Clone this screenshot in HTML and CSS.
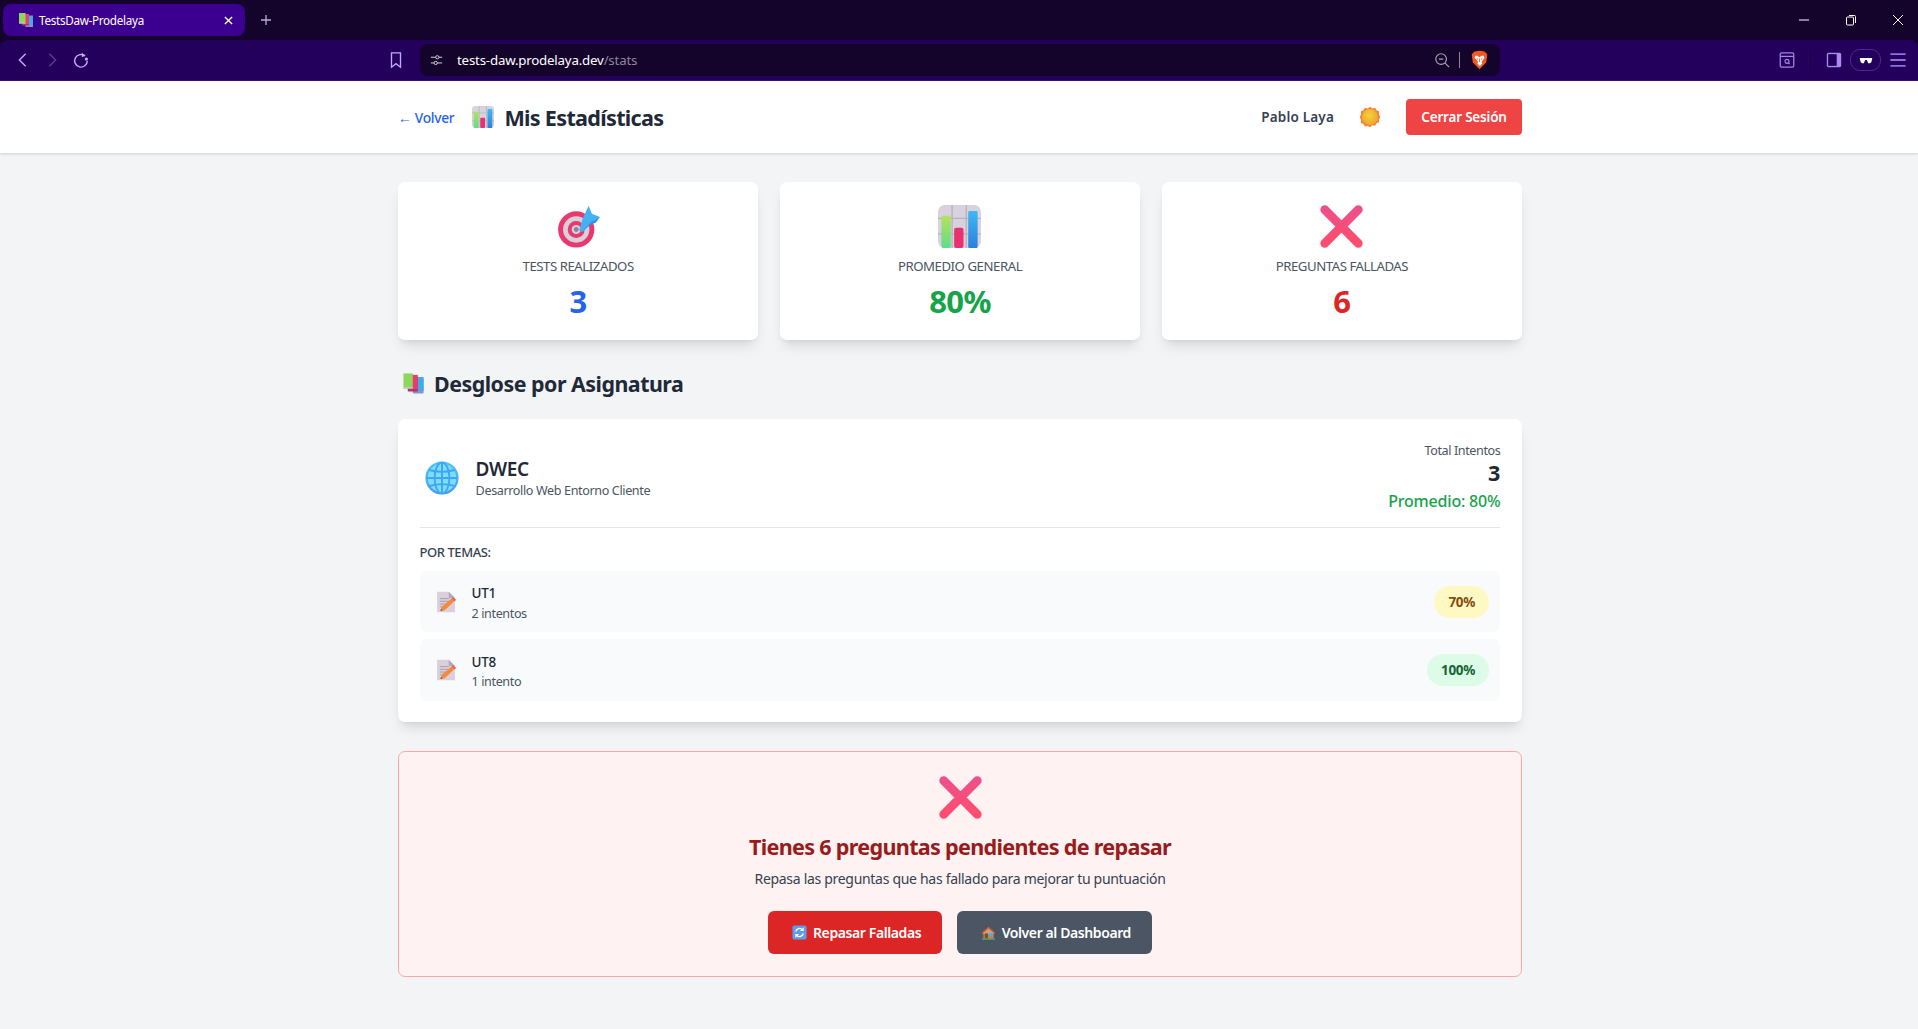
FILE: index.html
```html
<!DOCTYPE html>
<html lang="es">
<head>
<meta charset="utf-8">
<title>TestsDaw-Prodelaya</title>
<link rel="stylesheet" href="styles.css">
</head>
<body>
<svg class="defs" width="0" height="0" aria-hidden="true">
  <defs>
    <linearGradient id="gPink" x1="0" y1="0" x2="0" y2="1"><stop offset="0" stop-color="#ee4f8a"/><stop offset="1" stop-color="#ff4d6d"/></linearGradient>
    <linearGradient id="gGreen" x1="0" y1="0" x2="0" y2="1"><stop offset="0" stop-color="#b4e35a"/><stop offset="1" stop-color="#5fdc8a"/></linearGradient>
    <linearGradient id="gBlue" x1="0" y1="0" x2="0" y2="1"><stop offset="0" stop-color="#3db8f5"/><stop offset="1" stop-color="#2e7fdc"/></linearGradient>
    <linearGradient id="gGlobe" x1="0" y1="0" x2="0" y2="1"><stop offset="0" stop-color="#45c9f7"/><stop offset="1" stop-color="#4a9cf5"/></linearGradient>
    <radialGradient id="gSun" cx=".45" cy=".4" r=".6"><stop offset="0" stop-color="#f7d13c"/><stop offset="1" stop-color="#eaa92e"/></radialGradient>
    <symbol id="i-cross" viewBox="0 0 32 32">
      <path d="M3.500 3.500 28.500 28.500M28.500 3.500 3.500 28.500" fill="none" stroke="url(#gPink)" stroke-width="6.500" stroke-linecap="round"/>
    </symbol>
    <symbol id="i-chart" viewBox="0 0 32 32">
      <rect width="32" height="32" rx="5" fill="#d8d2de"/>
      <path d="M10.500 0v32M21 0v32M0 10h32M0 21.500h32" stroke="#b8b2bf" stroke-width="1"/>
      <rect x="2.500" y="8" width="7" height="24" rx="1.500" fill="url(#gGreen)"/>
      <rect x="12" y="17" width="7" height="15" rx="1.500" fill="#e8316f"/>
      <rect x="22.500" y="4.500" width="7" height="27.500" rx="1" fill="url(#gBlue)"/>
    </symbol>
    <symbol id="i-target" viewBox="0 0 32 32">
      <circle cx="14.300" cy="18.200" r="13.500" fill="#e8386d"/>
      <circle cx="14.300" cy="18.200" r="9.800" fill="#d7cfd9"/>
      <circle cx="14.300" cy="18.200" r="6.300" fill="#e8386d"/>
      <circle cx="14.300" cy="18.200" r="3.400" fill="#d7cfd9"/>
      <circle cx="14.300" cy="18.200" r="1.800" fill="#8a8590"/>
      <path d="M16.500 19 19 10.500 23.500.5l2.500 6 6 2.500-6 4-7 7z" fill="#45b1f5"/>
      <path d="M18.500 20 25 13l7-4-3 4-4 1.500z" fill="#2f93e6"/>
    </symbol>
    <symbol id="i-books" viewBox="0 0 32 32">
      <rect x="15" y="9" width="15" height="21" rx="1" fill="#8d8fd6"/>
      <rect x="15" y="7" width="15" height="19" fill="#3dace8"/>
      <rect x="8" y="6" width="14" height="21" rx="1" fill="#a8385f"/>
      <rect x="9" y="4" width="13" height="20" fill="#ec3a70"/>
      <rect x="2" y="2" width="13" height="21" fill="#8dd85c"/>
      <rect x="2" y="21" width="13" height="2" fill="#c9c4cf"/>
    </symbol>
    <symbol id="i-globe" viewBox="0 0 32 32">
      <circle cx="16" cy="16" r="14.500" fill="#7fdcfb" stroke="url(#gGlobe)" stroke-width="2.200"/>
      <g fill="none" stroke="#3ea7f3" stroke-width="1.800">
        <ellipse cx="16" cy="16" rx="7" ry="14.500"/>
        <path d="M16 1.500v29M1.500 16h29M4 8.500c7 2 17 2 24 0M4 23.500c7-2 17-2 24 0"/>
      </g>
    </symbol>
    <symbol id="i-doc" viewBox="0 0 32 32">
      <path d="M3 1h17l9 9v21H3z" fill="#d9d0dc"/>
      <path d="M20 1l9 9h-9z" fill="#b3a9ba"/>
      <path d="M7 11h13M7 15h15M7 19h11M7 23h7" stroke="#a49aa9" stroke-width="1.300"/>
      <path d="M8 29l2-6L24 11l4 4-14 13z" fill="#f58a3c"/>
      <path d="M24 11l2-2 5 4-3 2z" fill="#f4574e"/>
      <path d="M8 29l.8-3 2.200 2z" fill="#55404a"/>
    </symbol>
    <symbol id="i-sun" viewBox="0 0 32 32">
      <path d="M16 1l3.500 2.500 4-.8 2 3.600 3.800 1.500-.3 4.200L31 16l-2 3.500.3 4.200-3.800 1.500-2 3.600-4-.8L16 31l-3.500-2-4 .8-2-3.600-3.800-1.500.3-4.200L1 16l2-4-.3-4.200 3.800-1.500 2-3.600 4 .8z" fill="#f5863a"/>
      <circle cx="16" cy="16" r="11.500" fill="url(#gSun)"/>
    </symbol>
    <symbol id="i-refresh" viewBox="0 0 32 32">
      <rect x="1" y="1" width="30" height="30" rx="4" fill="#5b9cf0"/>
      <path d="M8 14a8 8 0 0 1 14-4M24 18a8 8 0 0 1-14 4" fill="none" stroke="#fff" stroke-width="2.800"/>
      <path d="M25 5v8h-8zM7 27v-8h8z" fill="#fff"/>
    </symbol>
    <symbol id="i-house" viewBox="0 0 32 32">
      <path d="M5 14h22v15H5z" fill="#b8895f"/>
      <path d="M1 17 16 3l15 14-2 2L16 7 3 19z" fill="#d9532c"/>
      <path d="M16 7 5 17v2h22v-2z" fill="#c9a17a"/>
      <rect x="8" y="18" width="7" height="11" fill="#7a4f2f"/>
      <rect x="18" y="17" width="7" height="6" fill="#45b1f5"/>
      <rect x="2" y="29" width="28" height="2" fill="#5fc46a"/>
    </symbol>
    <symbol id="i-brave" viewBox="0 0 24 28">
      <path d="M12 1 5 2 1 6l1.500 11L12 27l9.500-10L23 6l-4-4z" fill="#f05a22"/>
      <path d="M6 8h3l3 2 3-2h3l1 3-2.500 3-1.500 3 1 2-3 3h-1l-3-3 1-2-1.500-3L5 11z" fill="#fff"/>
      <path d="M12 12v5M8 12l2 1M16 12l-2 1" stroke="#f05a22" stroke-width="1.200"/>
    </symbol>
  </defs>
</svg>

<div class="browser">
  <div class="tabstrip">
    <div class="tab">
      <svg class="ico-14"><use href="#i-books"/></svg>
      <span class="tab-title">TestsDaw-Prodelaya</span>
      <svg class="tab-close" viewBox="0 0 10 10"><path d="M1 1l8 8M9 1 1 9" stroke="#fff" stroke-width="1.500"/></svg>
    </div>
    <svg class="tab-new" viewBox="0 0 12 12"><path d="M6 1v10M1 6h10" stroke="#b9aecb" stroke-width="1.300"/></svg>
    <div class="win-controls">
      <svg class="win-ico" viewBox="0 0 12 12"><path d="M1 6h10" stroke="#fff"/></svg>
      <svg class="win-ico" viewBox="0 0 12 12"><rect x="1.500" y="3" width="7" height="8" rx="1" fill="none" stroke="#fff"/><path d="M4 1.500h5.500a1 1 0 0 1 1 1V9" fill="none" stroke="#fff"/></svg>
      <svg class="win-ico" viewBox="0 0 12 12"><path d="M1 1l10 10M11 1 1 11" stroke="#fff"/></svg>
    </div>
  </div>
  <div class="toolbar">
    <div class="nav">
      <svg class="tb-ico" viewBox="0 0 20 20"><path d="M13 3 6 10l7 7" fill="none" stroke="#c2a9fb" stroke-width="1.600"/></svg>
      <svg class="tb-ico" viewBox="0 0 20 20"><path d="M7 3l7 7-7 7" fill="none" stroke="#5c3c9a" stroke-width="1.600"/></svg>
      <svg class="tb-ico" viewBox="0 0 20 20"><path d="M14.500 5.500a7 7 0 1 0 2.500 5.500" fill="none" stroke="#c2a9fb" stroke-width="1.600"/><circle cx="16" cy="9" r="1.800" fill="#c2a9fb"/><path d="M11 2l4 3-4 2" fill="#c2a9fb"/></svg>
    </div>
    <svg class="tb-ico bookmark" viewBox="0 0 20 20"><path d="M5 2h10v16l-5-4-5 4z" fill="none" stroke="#c2a9fb" stroke-width="1.500"/></svg>
    <div class="urlbar">
      <svg class="url-tune" viewBox="0 0 16 16"><path d="M1 4h6M11 4h4M1 11h4M9 11h6" stroke="#d7d2de" stroke-width="1.200"/><circle cx="9" cy="4" r="2" fill="none" stroke="#d7d2de" stroke-width="1.200"/><circle cx="7" cy="11" r="2" fill="none" stroke="#d7d2de" stroke-width="1.200"/></svg>
      <span class="url-text">tests-daw.prodelaya.dev<span class="url-path">/stats</span></span>
      <svg class="url-zoom" viewBox="0 0 18 18"><circle cx="8" cy="8" r="6" fill="none" stroke="#a9a3b3" stroke-width="1.300"/><path d="M5.500 8h5M12.500 12.500 17 17" stroke="#a9a3b3" stroke-width="1.300"/></svg>
      <span class="url-sep"></span>
      <svg class="url-brave"><use href="#i-brave"/></svg>
    </div>
    <div class="tools">
      <svg class="tb-ico" viewBox="0 0 20 20"><rect x="2.500" y="2" width="15" height="16" rx="1.500" fill="none" stroke="#a283ea" stroke-width="1.400"/><path d="M2.500 6h15" stroke="#a283ea" stroke-width="1.400"/><circle cx="10" cy="11.500" r="2.200" fill="none" stroke="#a283ea" stroke-width="1.300"/><path d="M11.500 13l1.500 1.500" stroke="#a283ea" stroke-width="1.300"/></svg>
      <span class="tool-sep"></span>
      <svg class="tb-ico" viewBox="0 0 20 20"><rect x="2" y="2" width="16" height="16" rx="2" fill="#a98af0"/><rect x="3.500" y="3.500" width="9.500" height="13" fill="#22005c"/></svg>
      <span class="glasses"><svg class="glasses-ico" viewBox="0 0 16 8"><path d="M1 1h14v1.500l-1 3.500-1.500 1h-2L9 3.500H7L5.500 7h-2L2 6 1 2.500z" fill="#fff"/></svg></span>
      <svg class="tb-ico" viewBox="0 0 20 20"><path d="M1.500 3.500h17M1.500 10h17M1.500 16.500h17" stroke="#8f6fe0" stroke-width="2"/></svg>
    </div>
  </div>
</div>

<header class="topbar">
  <div class="wrap topbar-inner">
    <div class="topbar-left">
      <a class="back">← Volver</a>
      <svg class="ico-title"><use href="#i-chart"/></svg>
      <h1 class="title">Mis Estadísticas</h1>
    </div>
    <div class="topbar-right">
      <span class="user">Pablo Laya</span>
      <svg class="ico-sun"><use href="#i-sun"/></svg>
      <button class="logout">Cerrar Sesión</button>
    </div>
  </div>
</header>

<main class="wrap main">
  <section class="stats">
    <div class="stat">
      <svg class="ico-stat"><use href="#i-target"/></svg>
      <div class="stat-label">TESTS REALIZADOS</div>
      <div class="stat-value blue">3</div>
    </div>
    <div class="stat">
      <svg class="ico-stat"><use href="#i-chart"/></svg>
      <div class="stat-label">PROMEDIO GENERAL</div>
      <div class="stat-value green">80%</div>
    </div>
    <div class="stat">
      <svg class="ico-stat"><use href="#i-cross"/></svg>
      <div class="stat-label">PREGUNTAS FALLADAS</div>
      <div class="stat-value red">6</div>
    </div>
  </section>

  <h2 class="section-title"><svg class="ico-section"><use href="#i-books"/></svg>Desglose por Asignatura</h2>

  <section class="subject">
    <div class="subject-head">
      <div class="subject-id">
        <svg class="ico-globe"><use href="#i-globe"/></svg>
        <div>
          <div class="subject-name">DWEC</div>
          <div class="subject-desc">Desarrollo Web Entorno Cliente</div>
        </div>
      </div>
      <div class="subject-totals">
        <div class="total-label">Total Intentos</div>
        <div class="total-value">3</div>
        <div class="total-avg">Promedio: 80%</div>
      </div>
    </div>
    <div class="topics-label">POR TEMAS:</div>
    <div class="topics">
      <div class="topic">
        <svg class="ico-doc"><use href="#i-doc"/></svg>
        <div class="topic-text">
          <div class="topic-name">UT1</div>
          <div class="topic-sub">2 intentos</div>
        </div>
        <span class="badge badge-yellow">70%</span>
      </div>
      <div class="topic">
        <svg class="ico-doc"><use href="#i-doc"/></svg>
        <div class="topic-text">
          <div class="topic-name">UT8</div>
          <div class="topic-sub">1 intento</div>
        </div>
        <span class="badge badge-green">100%</span>
      </div>
    </div>
  </section>

  <section class="pending">
    <svg class="ico-stat"><use href="#i-cross"/></svg>
    <h3 class="pending-title">Tienes 6 preguntas pendientes de repasar</h3>
    <p class="pending-text">Repasa las preguntas que has fallado para mejorar tu puntuación</p>
    <div class="actions">
      <button class="btn btn-red"><svg class="ico-btn"><use href="#i-refresh"/></svg>Repasar Falladas</button>
      <button class="btn btn-gray"><svg class="ico-btn"><use href="#i-house"/></svg>Volver al Dashboard</button>
    </div>
  </section>
</main>
</body>
</html>
```

FILE: styles.css
```css
* { box-sizing: border-box; }
html, body { margin: 0; height: 100%; }
body {
  background: #f3f4f6;
  color: #1f2937;
  font-family: "Noto Sans", "Open Sans", sans-serif;
  overflow: hidden;
}
.defs { position: absolute; }
svg { display: block; flex: none; }

/* browser chrome */
.browser { background: #14032b; height: 81px; font-family: "Noto Sans", sans-serif; }
.tabstrip { height: 40px; padding: 4px 0 4px 3px; display: flex; align-items: center; }
.tab {
  width: 242px; height: 32px; background: #3b0090; border-radius: 8px;
  display: flex; align-items: center; padding: 0 12px 0 15px; gap: 5px; color: #fff;
}
.ico-14 { width: 16px; height: 16px; }
.tab-title { flex: 1; font-size: 11.700px; letter-spacing: -.3px; }
.tab-close { width: 9px; height: 9px; }
.tab-new { width: 12px; height: 12px; margin-left: 15px; }
.win-controls { margin-left: auto; display: flex; gap: 35px; padding-right: 14px; }
.win-ico { width: 12px; height: 12px; }
.toolbar {
  height: 41px; background: #22005c; border-radius: 8px 8px 0 0;
  border-bottom: 1px solid #3a1278; display: flex; align-items: center; padding: 0 11px 0 14px;
}
.nav { display: flex; gap: 11px; align-items: center; }
.tb-ico { width: 18px; height: 18px; }
.bookmark { margin-left: 297px; }
.urlbar {
  margin-left: 15px; width: 1080px; height: 32px; background: #14032b; border-radius: 8px;
  display: flex; align-items: center; padding: 0 12px 0 10px; color: #fff;
}
.url-tune { width: 13px; height: 13px; }
.url-text { flex: 1; margin-left: 14px; font-size: 13.300px; letter-spacing: -.2px; }
.url-path { color: #8d8798; }
.url-zoom { width: 16px; height: 16px; }
.url-sep { width: 1px; height: 16px; background: #8d8798; margin: 0 11px 0 9px; }
.url-brave { width: 17px; height: 20px; }
.tools { display: flex; align-items: center; margin-left: auto; }
.tool-sep { width: 1px; height: 20px; background: #14032b; margin: 0 14px; }
.glasses {
  width: 31px; height: 22px; border: 1px solid #4a2a90; border-radius: 10px;
  margin: 0 8px 0 7px; display: flex; align-items: center; justify-content: center;
}
.glasses-ico { width: 14px; height: 7px; }

/* page */
.wrap { width: 1124px; margin: 0 0 0 398px; }
.topbar { background: #fff; height: 72px; box-shadow: 0 1px 3px rgba(0,0,0,.1), 0 1px 2px rgba(0,0,0,.06); position: relative; }
.topbar-inner { height: 100%; display: flex; align-items: center; justify-content: space-between; }
.topbar-left, .topbar-right { display: flex; align-items: center; }
.back { color: #2563eb; font-size: 13.800px; font-weight: 500; letter-spacing: -.3px; }
.ico-title { width: 22px; height: 22px; margin: 0 10px 0 18px; }
.title { margin: 0; font-size: 21.6px; font-weight: 700; color: #1f2937; letter-spacing: -.7px; }
.user { font-size: 13.500px; font-weight: 600; color: #374151; letter-spacing: .2px; }
.ico-sun { width: 22px; height: 22px; margin: 0 25px; }
.logout {
  width: 116px; height: 36px; border: 0; border-radius: 4px; background: #ef4444; color: #fff;
  font: 600 13.500px "Noto Sans", sans-serif; letter-spacing: -.2px;
}

.main { padding-top: 28.8px; }
.stats { display: grid; grid-template-columns: repeat(3, 1fr); gap: 21.6px; }
.stat {
  height: 158px; background: #fff; border-radius: 7px; padding: 23px 21.6px 0;
  box-shadow: 0 9px 13px -3px rgba(0,0,0,.1), 0 4px 6px -4px rgba(0,0,0,.1);
  display: flex; flex-direction: column; align-items: center;
}
.ico-stat { width: 43px; height: 43px; }
.stat-label { margin-top: 9px; font-size: 13.200px; line-height: 18px; color: #4b5563; letter-spacing: -.45px; }
.stat-value { margin-top: 8px; font-size: 31px; line-height: 36px; font-weight: 700; letter-spacing: -.6px; }
.blue { color: #2563eb; }
.green { color: #16a34a; }
.red { color: #dc2626; }

.section-title {
  margin: 29px 0 20.500px; height: 30px; display: flex; align-items: center;
  font-size: 21.400px; font-weight: 700; letter-spacing: -.5px; color: #1f2937;
}
.ico-section { width: 23px; height: 23px; margin: 0 9px 0 4px; }

.subject {
  height: 303px; background: #fff; border-radius: 7px; padding: 21.6px;
  box-shadow: 0 9px 13px -3px rgba(0,0,0,.1), 0 4px 6px -4px rgba(0,0,0,.1);
}
.subject-head {
  height: 86.900px; border-bottom: 1px solid #e5e7eb;
  display: flex; justify-content: space-between;
}
.subject-id { display: flex; align-items: center; gap: 17px; padding: 0 0 11px 5px; }
.ico-globe { width: 34px; height: 34px; }
.subject-name { font-size: 19px; line-height: 24px; font-weight: 600; color: #1f2937; letter-spacing: -.3px; }
.subject-desc { margin-top: 1.500px; font-size: 12.6px; line-height: 18px; color: #4b5563; letter-spacing: -.38px; }
.subject-totals { text-align: right; padding-top: 1.500px; }
.total-label { font-size: 12.6px; line-height: 18px; color: #4b5563; letter-spacing: -.4px; }
.total-value { font-size: 21.6px; line-height: 26px; font-weight: 700; color: #1f2937; }
.total-avg { margin-top: 3.500px; font-size: 16px; line-height: 22px; font-weight: 500; color: #16a34a; letter-spacing: -.2px; }

.topics-label { margin-top: 15px; font-size: 13px; line-height: 18px; font-weight: 500; color: #374151; letter-spacing: -.45px; }
.topics { margin-top: 10px; display: flex; flex-direction: column; gap: 7.200px; }
.topic {
  height: 61.500px; background: #f9fafb; border-radius: 7px; padding: 0 11px 0 15px;
  display: flex; align-items: center;
}
.ico-doc { width: 22px; height: 22px; margin-right: 15px; }
.topic-text { flex: 1; padding-top: 3.600px; }
.topic-name { font-size: 13.500px; line-height: 20px; font-weight: 500; color: #1f2937; letter-spacing: -.3px; }
.topic-sub { margin-top: .5px; font-size: 12.600px; line-height: 20px; color: #4b5563; letter-spacing: -.4px; }
.badge { height: 32px; padding: 0 14.400px; border-radius: 16px; font-size: 13.500px; font-weight: 700; line-height: 32px; letter-spacing: -.35px; }
.badge-yellow { background: #fef9c3; color: #854d0e; }
.badge-green { background: #dcfce7; color: #166534; }

.pending {
  margin-top: 29px; height: 226px; background: #fef2f2; border: 1px solid #fca5a5; border-radius: 7px;
  display: flex; flex-direction: column; align-items: center; padding-top: 24px;
}
.pending-title { margin: 13px 0 0; font-size: 21.6px; line-height: 30px; font-weight: 700; color: #991b1b; letter-spacing: -.7px; }
.pending-text { margin: 7px 0 0; font-size: 14px; line-height: 20px; color: #374151; letter-spacing: -.3px; }
.actions { margin-top: 22px; display: flex; gap: 14.400px; }
.btn {
  height: 43px; border: 0; border-radius: 6px; color: #fff;
  font: 600 14px "Noto Sans", sans-serif; letter-spacing: -.4px;
  display: flex; align-items: center; gap: 6px; padding: 0 21px 0 24px;
}
.btn-red { background: #dc2626; }
.btn-gray { background: #4b5563; }
.ico-btn { width: 15px; height: 15px; }
```
